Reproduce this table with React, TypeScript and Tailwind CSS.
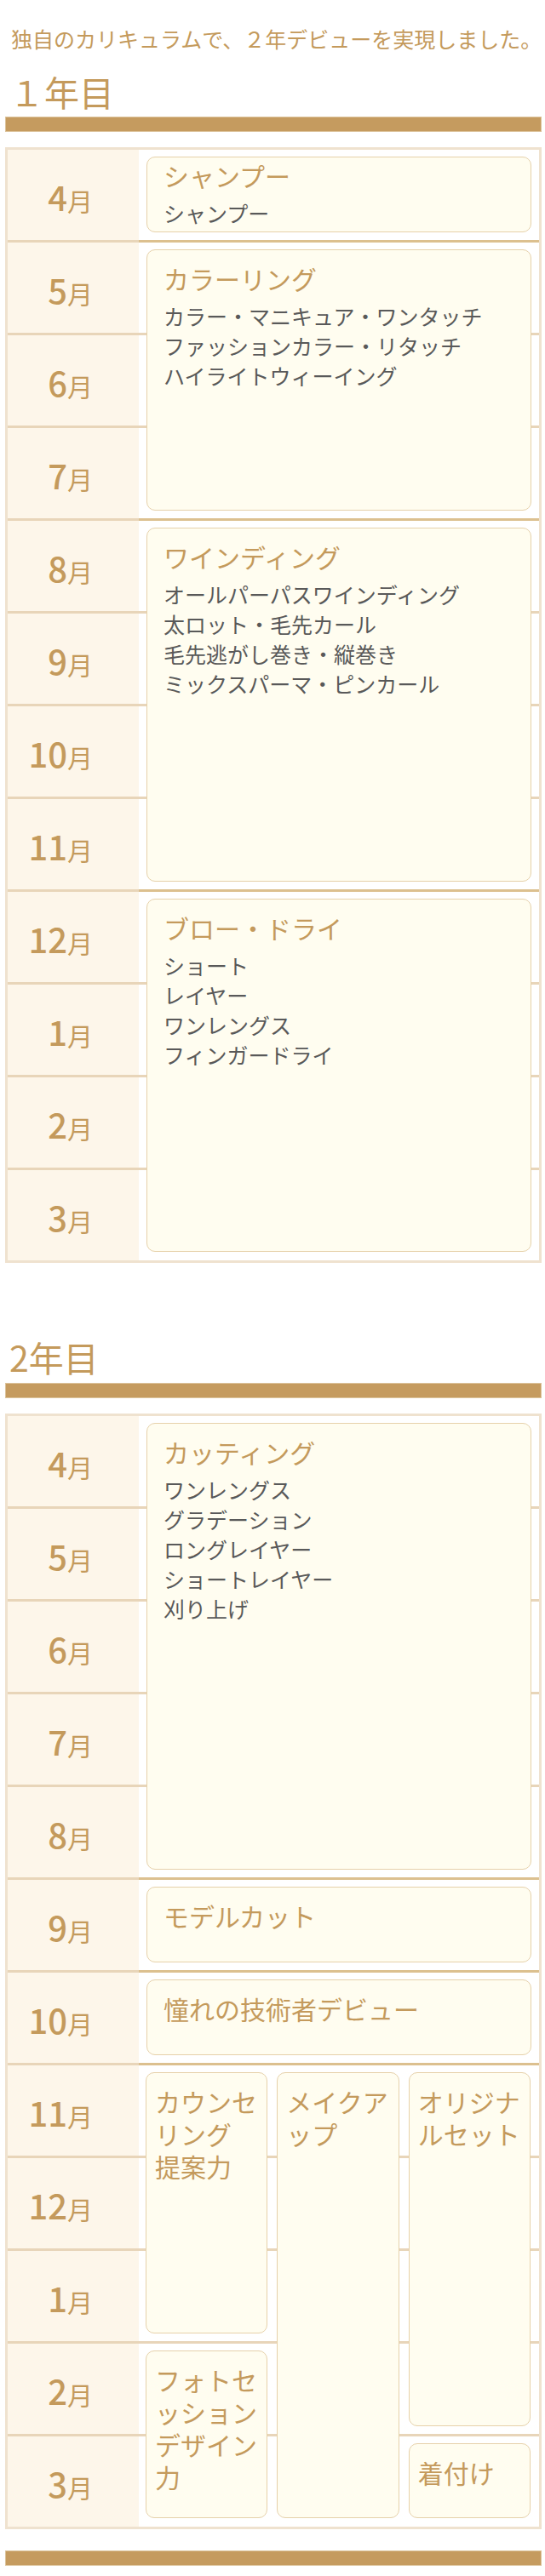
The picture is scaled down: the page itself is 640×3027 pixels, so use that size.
import React from "react";

type Group = {
  start: number;
  span: number;
  title: string;
  items?: string[];
  tight?: boolean;
};

const months = ["4", "5", "6", "7", "8", "9", "10", "11", "12", "1", "2", "3"];

const rowStart = [
  "",
  "row-start-1",
  "row-start-2",
  "row-start-3",
  "row-start-4",
  "row-start-5",
  "row-start-6",
  "row-start-7",
  "row-start-8",
  "row-start-9",
  "row-start-10",
  "row-start-11",
  "row-start-12",
];

const rowSpan = ["", "row-span-1", "row-span-2", "row-span-3", "row-span-4", "row-span-5"];
const colStart = ["", "col-start-1", "col-start-2", "col-start-3"];

const year1: Group[] = [
  { start: 1, span: 1, title: "シャンプー", items: ["シャンプー"], tight: true },
  {
    start: 2,
    span: 3,
    title: "カラーリング",
    items: ["カラー・マニキュア・ワンタッチ", "ファッションカラー・リタッチ", "ハイライトウィーイング"],
  },
  {
    start: 5,
    span: 4,
    title: "ワインディング",
    items: ["オールパーパスワインディング", "太ロット・毛先カール", "毛先逃がし巻き・縦巻き", "ミックスパーマ・ピンカール"],
  },
  {
    start: 9,
    span: 4,
    title: "ブロー・ドライ",
    items: ["ショート", "レイヤー", "ワンレングス", "フィンガードライ"],
  },
];

const year2: Group[] = [
  {
    start: 1,
    span: 5,
    title: "カッティング",
    items: ["ワンレングス", "グラデーション", "ロングレイヤー", "ショートレイヤー", "刈り上げ"],
  },
  { start: 6, span: 1, title: "モデルカット" },
  { start: 7, span: 1, title: "憧れの技術者デビュー" },
];

// 11月〜3月 の3列ブロック (row は 1〜5)
const year2Split = [
  { col: 1, start: 1, span: 3, title: "カウンセ\nリング\n提案力" },
  { col: 1, start: 4, span: 2, title: "フォトセ\nッション\nデザイン\n力" },
  { col: 2, start: 1, span: 5, title: "メイクア\nップ" },
  { col: 3, start: 1, span: 4, title: "オリジナ\nルセット" },
  { col: 3, start: 5, span: 1, title: "着付け" },
];

function Card({ title, items, tight, narrow }: { title: string; items?: string[]; tight?: boolean; narrow?: boolean }) {
  return (
    <div
      className={`flex-1 rounded-[10px] border border-[#e6d1aa] bg-[#fffdf0] ${
        narrow ? "pl-[10px] pr-[2px]" : "pl-[19px] pr-[10px]"
      } ${tight ? "pt-[2px]" : "pt-[14px]"}`}
    >
      <div className="whitespace-pre-line text-[30px] leading-[38px] text-[#c49a5c]">{title}</div>
      {items && (
        <ul className="mt-[8px] text-[25px] leading-[35px] text-[#595959]">
          {items.map((it) => (
            <li key={it} className="whitespace-nowrap">
              {it}
            </li>
          ))}
        </ul>
      )}
    </div>
  );
}

function MonthLabel({ n, row }: { n: string; row: number }) {
  return (
    <div
      className={`col-start-1 ${rowStart[row]} flex h-[106px] items-center justify-end self-start bg-[#fdf6ea] pr-[54px] pt-[4px] text-[#c49a5c]`}
    >
      <div className="flex items-baseline">
        <span className="text-[40px] leading-none font-medium">{n}</span>
        <span className="text-[30px] leading-none">月</span>
      </div>
    </div>
  );
}

function Schedule({ groups, split }: { groups: Group[]; split?: boolean }) {
  return (
    <div className="grid grid-cols-[154px_1fr] grid-rows-[repeat(11,109px)_106px] border-[3px] border-[#efe2cf] bg-white">
      {months.map((m, i) => (
        <div
          key={"line" + i}
          className={`col-span-full col-start-1 ${rowStart[i + 1]} ${i < 11 ? "border-b-[3px] border-[#e8d5b9]" : ""}`}
        />
      ))}
      {months.map((m, i) => (
        <MonthLabel key={"m" + i} n={m} row={i + 1} />
      ))}
      {groups.map((g) => {
        const last = g.start + g.span > 12;
        return (
          <div
            key={g.title}
            className={`col-start-2 ${rowStart[g.start]} ${rowSpan[g.span]} flex flex-col px-[9px] pt-[8px] ${
              last ? "pb-[10px]" : "border-b-[3px] border-[#dcc08f] pb-[9px]"
            }`}
          >
            <Card title={g.title} items={g.items} tight={g.tight} />
          </div>
        );
      })}
      {split && (
        <div className="col-start-2 row-start-8 row-span-5 grid grid-cols-3 grid-rows-[repeat(4,109px)_106px] gap-x-[11px] pl-[8px] pr-[10px]">
          {year2Split.map((s) => {
            const last = s.start + s.span > 5;
            return (
              <div
                key={s.title}
                className={`${colStart[s.col]} ${rowStart[s.start]} ${rowSpan[s.span]} flex flex-col pt-[8px] ${
                  last ? "pb-[10px]" : "pb-[12px]"
                }`}
              >
                <Card title={s.title} narrow />
              </div>
            );
          })}
        </div>
      )}
    </div>
  );
}

function Bar() {
  return <div className="h-[18px] border border-[#dcc39b] bg-[#c59b5f]" />;
}

export default function App() {
  return (
    <div className="w-[640px] bg-white pb-[10px] font-['Noto_Sans_CJK_JP',sans-serif]">
      <div className="ml-[6px] mr-[4px]">
        <p className="whitespace-nowrap pl-[7px] pt-[30px] text-[25px] leading-[30px] text-[#c49a5c]">
          独自のカリキュラムで、２年デビューを実現しました。
        </p>

        <h2 className="mt-[27px] pl-[5px] text-[41px] leading-[41px] font-normal text-[#c49a5c]">１年目</h2>
        <div className="mt-[9px]">
          <Bar />
        </div>
        <div className="mt-[18px]">
          <Schedule groups={year1} />
        </div>

        <h2 className="mt-[90px] pl-[5px] text-[41px] leading-[41px] font-normal text-[#c49a5c]">2年目</h2>
        <div className="mt-[10px]">
          <Bar />
        </div>
        <div className="mt-[18px]">
          <Schedule groups={year2} split />
        </div>

        <div className="mt-[25px]">
          <Bar />
        </div>
      </div>
    </div>
  );
}
